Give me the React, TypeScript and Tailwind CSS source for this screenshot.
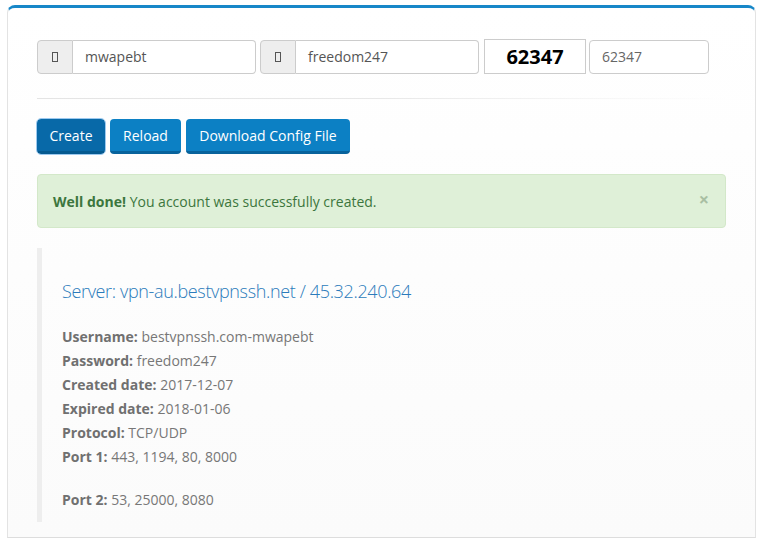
import React from "react";

function Tofu() {
  return <span className="inline-block w-[6px] h-[10px] border border-[#555]" />;
}

function AddonInput({ value }: { value: string }) {
  return (
    <div className="flex w-[219px] h-[34px]">
      <div className="w-[36px] flex items-center justify-center bg-[#eeeeee] border border-[#cccccc] rounded-l-[4px]">
        <Tofu />
      </div>
      <div className="flex-1 flex items-center px-3 border border-l-0 border-[#cccccc] rounded-r-[4px] bg-white text-[14px] text-[#555]">
        {value}
      </div>
    </div>
  );
}

export default function App() {
  const details = [
    ["Username:", "bestvpnssh.com-mwapebt"],
    ["Password:", "freedom247"],
    ["Created date:", "2017-12-07"],
    ["Expired date:", "2018-01-06"],
    ["Protocol:", "TCP/UDP"],
    ["Port 1:", "443, 1194, 80, 8000"],
  ];

  return (
    <div className="w-[761px] h-[541px] bg-white overflow-hidden" style={{ fontFamily: '"Open Sans", sans-serif' }}>
      <div className="ml-[7px] mr-[5px] mt-[5px] h-[533px] border-t-[3px] border-t-[#1787c8] border-x border-x-[#e3e3e3] border-b border-b-[#dddddd] rounded-t-[8px] bg-gradient-to-b from-white to-[#fbfbfb] pl-[29px] pt-[31px]">
        {/* inputs */}
        <div className="flex items-center">
          <AddonInput value="mwapebt" />
          <div className="w-[4px]" />
          <AddonInput value="freedom247" />
          <div className="ml-[5px] w-[102px] h-[35px] border border-[#cccccc] bg-white flex items-center justify-center text-[20px] font-bold text-black">
            62347
          </div>
          <div className="ml-[3px] w-[120px] h-[34px] flex items-center px-3 border border-[#cccccc] rounded-[4px] bg-white text-[14px] text-[#666]">
            62347
          </div>
        </div>

        <div className="mt-[24px] h-px w-[690px] bg-gradient-to-r from-[#e4e4e4] via-[#e8e8e8] to-transparent" />

        {/* buttons */}
        <div className="mt-[20px] flex gap-[5px]">
          <button className="h-[35px] w-[68px] rounded-[4px] bg-[#0869a8] border-b-[3px] border-[#055a90] text-white text-[14px] outline outline-1 outline-[#9cc9ef]">
            Create
          </button>
          <button className="h-[35px] w-[71px] rounded-[4px] bg-[#0c80c4] border-b-[3px] border-[#08639c] text-white text-[14px]">
            Reload
          </button>
          <button className="h-[35px] w-[164px] rounded-[4px] bg-[#0c80c4] border-b-[3px] border-[#08639c] text-white text-[14px]">
            Download Config File
          </button>
        </div>

        {/* alert */}
        <div className="mt-[20px] w-[689px] h-[54px] flex items-center justify-between pl-[15px] pr-[16px] bg-[#dff0d8] border border-[#d3e8c9] rounded-[4px] text-[14px] text-[#3c763d]">
          <div>
            <span className="font-bold">Well done!</span> You account was successfully created.
          </div>
          <span className="text-[18px] font-bold text-[#a9bfa3] leading-none -mt-[4px]">×</span>
        </div>

        {/* blockquote */}
        <div className="mt-[20px] w-[689px] border-l-[5px] border-[#eeeeee] pl-[20px] pt-[32px] pb-[10px]">
          <div className="text-[18px] leading-[22px] font-light tracking-[-0.35px] text-[#2b7bbb]">
            Server: vpn-au.bestvpnssh.net / 45.32.240.64
          </div>
          <div className="mt-[23px] text-[14px] leading-[24px] text-[#777]">
            {details.map(([k, v]) => (
              <div key={k}>
                <span className="font-bold text-[#707070]">{k}</span> {v}
              </div>
            ))}
            <div className="mt-[19px]">
              <span className="font-bold text-[#707070]">Port 2:</span> 53, 25000, 8080
            </div>
          </div>
        </div>
      </div>
    </div>
  );
}
